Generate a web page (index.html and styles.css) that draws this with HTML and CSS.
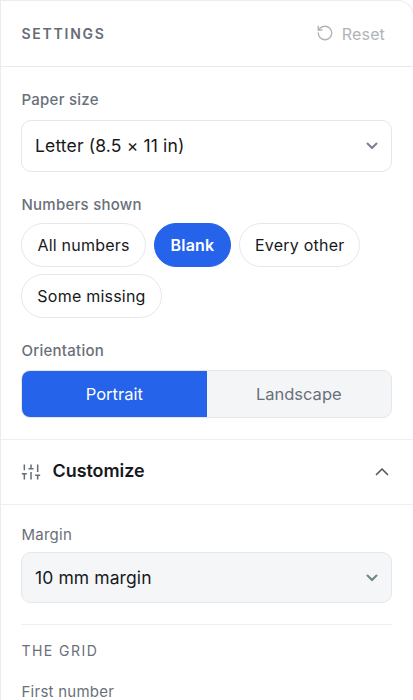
FILE: index.html
```html
<!DOCTYPE html>
<html lang="en">
<head>
<meta charset="utf-8">
<title>Settings</title>
<link rel="stylesheet" href="styles.css">
</head>
<body>
<main class="panel">
  <header class="header">
    <h1 class="title">SETTINGS</h1>
    <button class="reset">
      <svg width="18" height="18" viewBox="0 0 24 24"><path d="M3 12a9 9 0 1 0 9-9 9.750 9.750 0 0 0-6.740 2.740L3 8"/><path d="M3 3v5h5"/></svg>
      <span>Reset</span>
    </button>
  </header>
  <section class="basics">
    <div class="label medium">Paper size</div>
    <div class="select"><span>Letter (8.5 × 11 in)</span>
      <svg class="chevron" width="12" height="8" viewBox="0 0 12 8"><path d="M1.500 1.500 6 6l4.500-4.500"/></svg>
    </div>
    <div class="label medium numbers">Numbers shown</div>
    <div class="pills">
      <button class="pill all">All numbers</button>
      <button class="pill blank">Blank</button>
      <button class="pill every">Every other</button>
      <button class="pill some">Some missing</button>
    </div>
    <div class="label medium orientation">Orientation</div>
    <div class="segments">
      <button class="segment active">Portrait</button>
      <button class="segment">Landscape</button>
    </div>
  </section>
  <div class="customize">
    <svg class="sliders" width="20" height="20" viewBox="0 0 24 24"><path d="M4 21v-7M4 10V3M12 21v-9M12 8V3M20 21v-5M20 12V3M1 14h6M9 8h6M17 16h6"/></svg>
    <h2>Customize</h2>
    <svg class="chevron up" width="14" height="9" viewBox="0 0 14 9"><path d="m1.500 7.500 5.500-5.500 5.500 5.500"/></svg>
  </div>
  <section class="details">
    <div class="label">Margin</div>
    <div class="select filled"><span>10 mm margin</span>
      <svg class="chevron" width="12" height="8" viewBox="0 0 12 8"><path d="M1.500 1.500 6 6l4.500-4.500"/></svg>
    </div>
    <h3 class="group">THE GRID</h3>
    <div class="label">First number</div>
  </section>
</main>
</body>
</html>
```

FILE: styles.css
```css
* { box-sizing: border-box; }
html { overflow: hidden; }
body { margin: 0; height: 700px; overflow: hidden; background: #fff; font-family: Inter, sans-serif; color: #17191c; }
h1, h2, h3 { margin: 0; }
button { font: inherit; color: inherit; background: none; border: 0; padding: 0; }
svg { display: block; fill: none; stroke: currentColor; stroke-width: 2; stroke-linecap: round; stroke-linejoin: round; flex: none; }
.panel { width: 414px; height: 700px; overflow: hidden; border: 1px solid #ececee; border-bottom: 0; border-radius: 0 16px 0 0; }
.header { height: 66px; padding: 0 28px 0 20.500px; display: flex; align-items: center; justify-content: space-between; border-bottom: 1px solid #e9eaec; }
.title { font-size: 14px; font-weight: 600; letter-spacing: 1.750px; color: #666c75; }
.reset { display: flex; align-items: center; gap: 8px; font-size: 16px; letter-spacing: .15px; color: #b0b3b8; }
.reset svg { margin-top: -1px; stroke-width: 1.800; }
.basics { height: 373px; padding: 23px 20px 0; border-bottom: 1px solid #eeeff1; }
.label { height: 20px; padding-left: .5px; line-height: 20px; font-size: 15px; letter-spacing: .25px; color: #69707a; }
.medium { font-weight: 500; }
.select { height: 52px; margin-top: 10px; padding: 0 13px; display: flex; align-items: center; justify-content: space-between; border: 1px solid #e4e6e9; border-radius: 10px; font-size: 17.500px; letter-spacing: .15px; }
.select span { padding-bottom: 1px; }
.chevron { color: #7b828d; }
.numbers { margin-top: 23px; }
.pills { display: flex; flex-wrap: wrap; gap: 7px 8px; margin-top: 8px; padding-bottom: 1px; }
.pill { height: 44px; padding: 0 15px; border: 1px solid #e6e7ea; border-radius: 22px; font-size: 16px; letter-spacing: .22px; white-space: nowrap; }
.all { width: 125px; }
.blank { width: 77px; color: #fff; font-weight: 600; background: #2563eb; border-color: #2563eb; }
.every { width: 121px; }
.some { width: 141px; }
.orientation { margin-top: 22px; }
.segments { display: flex; height: 48px; margin-top: 9px; border: 1px solid #e4e6e9; border-radius: 9px; overflow: hidden; background: #f4f5f7; }
.segment { flex: 1; font-size: 16.500px; color: #69707a; }
.segment.active { background: #2563eb; color: #fff; }
.customize { height: 65px; padding: 0 24px 0 20px; display: flex; align-items: center; border-bottom: 1px solid #eeeff1; }
.customize h2 { margin-left: 11.500px; padding-bottom: 3px; flex: 1; font-size: 17.900px; font-weight: 600; }
.sliders { color: #666c75; stroke-width: 1.800; stroke-linecap: butt; }
.up { color: #555b63; stroke-width: 1.700; margin-top: -1px; }
.details { padding: 20px 21px 0 20px; }
.basics { padding-right: 21px; }
.filled { height: 51px; margin-top: 7px; background: #f5f6f8; }
.filled span { letter-spacing: .1px; padding: 0; }
.filled .chevron { color: #6c8587; }
.group { height: 58px; margin-top: 21px; padding: 16px 0 0 .5px; border-top: 1px solid #eeeff1; font-size: 14px; line-height: 20px; font-weight: 400; letter-spacing: 1.450px; color: #69707a; }
```
